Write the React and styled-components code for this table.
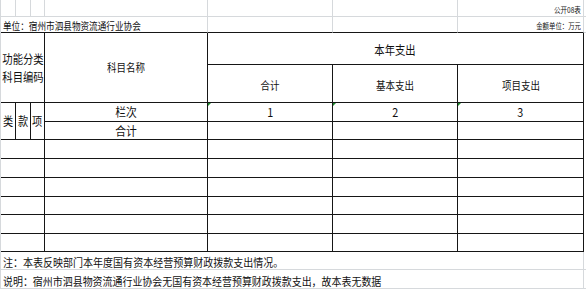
import styled, {createGlobalStyle} from "styled-components";

const DARK = "#161616";
const LIGHT = "#d6d9dc";

const GlobalStyle = createGlobalStyle`
  html, body {
    margin: 0;
    padding: 0;
    background: #fff;
  }
  body {
    font-family: "Noto Sans CJK SC", "Liberation Sans", sans-serif;
    color: #111;
  }
`;

const Sheet = styled.div`
  display: grid;
  grid-template-columns: 15px 15px 14px 163px 125px 125px 126px 1fr;
  grid-template-rows: 17px 16px 32px 38px 19px 18px 19px 19px 19px 18px 19px 18px 18px 19px;
  width: 586px;
  box-sizing: border-box;
  border-left: 1px solid ${LIGHT};
`;

const Cell = styled.div`
  grid-column: ${p => p.$c};
  grid-row: ${p => p.$r};
  box-sizing: border-box;
  position: relative;
  display: flex;
  overflow: visible;
  white-space: nowrap;
  align-items: ${p => p.$v || "center"};
  justify-content: ${p => p.$h || "center"};
  padding: ${p => p.$pad || "0"};
  border-right: 1px solid ${p => (p.$rd ? DARK : LIGHT)};
  border-bottom: 1px solid ${p => (p.$bd ? DARK : LIGHT)};
`;

// green "number stored as text" marker in the corner
const Marked = styled(Cell)`
  &::before {
    content: "";
    position: absolute;
    left: 0;
    top: 0;
    border-top: 3px solid #1e8a2e;
    border-right: 3px solid transparent;
  }
`;

const Txt = styled.span`
  display: inline-block;
  font-size: ${p => p.$size || 11}px;
  line-height: ${p => p.$lh || 1.1};
  transform: scaleX(${p => p.$sx || 0.86});
  transform-origin: ${p => p.$o || "center"};
  text-align: center;
`;

const Blank = styled.div`
  grid-column: 8;
  grid-row: ${p => p.$r};
  border-bottom: 1px solid ${LIGHT};
`;

const dataRows = [7, 8, 9, 10, 11, 12];

export default function App() {
  return (
    <>
      <GlobalStyle />
      <Sheet>
        {/* 顶部 */}
        {[1, 2, 3, 4, 5, 6].map(c => <Cell key={c} $c={c} $r={1} />)}
        <Cell $c={7} $r={1} $h="flex-end" $v="flex-end" $pad="0 2px 1px 0">
          <Txt $size={8} $sx={0.82} $o="right">公开08表</Txt>
        </Cell>
        <Blank $r={1} />

        <Cell $c="1 / 5" $r={2} $bd $h="flex-start" $v="flex-end" $pad="0 0 0 2px">
          <Txt $size={10.5} $sx={0.82} $o="left">单位：宿州市泗县物资流通行业协会</Txt>
        </Cell>
        <Cell $c={5} $r={2} $bd />
        <Cell $c={6} $r={2} $bd />
        <Cell $c={7} $r={2} $bd $h="flex-end" $v="flex-end" $pad="0 2px 1px 0">
          <Txt $size={8} $sx={0.8} $o="right">金额单位：万元</Txt>
        </Cell>
        <Blank $r={2} />

        {/* 表头 */}
        <Cell $c="1 / 4" $r="3 / 5" $rd $bd>
          <Txt $size={12} $sx={0.86} $lh={1.5}>功能分类<br />科目编码</Txt>
        </Cell>
        <Cell $c={4} $r="3 / 5" $rd $bd>
          <Txt $size={11}>科目名称</Txt>
        </Cell>
        <Cell $c="5 / 8" $r={3} $rd $bd $pad="2px 0 0 0">
          <Txt $size={12}>本年支出</Txt>
        </Cell>
        <Cell $c={5} $r={4} $rd $bd $pad="3px 0 0 0"><Txt>合计</Txt></Cell>
        <Cell $c={6} $r={4} $rd $bd $pad="3px 0 0 0"><Txt>基本支出</Txt></Cell>
        <Cell $c={7} $r={4} $rd $bd $pad="3px 0 0 0"><Txt>项目支出</Txt></Cell>

        {/* 栏次 / 合计 */}
        <Cell $c={1} $r="5 / 7" $rd $bd><Txt $size={12} $sx={0.85}>类</Txt></Cell>
        <Cell $c={2} $r="5 / 7" $rd $bd><Txt $size={12} $sx={0.85}>款</Txt></Cell>
        <Cell $c={3} $r="5 / 7" $rd $bd><Txt $size={12} $sx={0.85}>项</Txt></Cell>
        <Cell $c={4} $r={5} $rd $bd><Txt $size={12} $sx={0.9}>栏次</Txt></Cell>
        <Marked $c={5} $r={5} $rd $bd><Txt $size={12} $sx={0.9}>1</Txt></Marked>
        <Marked $c={6} $r={5} $rd $bd><Txt $size={12} $sx={0.9}>2</Txt></Marked>
        <Marked $c={7} $r={5} $rd $bd><Txt $size={12} $sx={0.9}>3</Txt></Marked>
        <Cell $c={4} $r={6} $rd $bd><Txt $size={12} $sx={0.9}>合计</Txt></Cell>
        <Cell $c={5} $r={6} $rd $bd />
        <Cell $c={6} $r={6} $rd $bd />
        <Cell $c={7} $r={6} $rd $bd />

        {/* 空行 */}
        {dataRows.map(r => [
          <Cell key={r + "a"} $c="1 / 4" $r={r} $rd $bd />,
          <Cell key={r + "b"} $c={4} $r={r} $rd $bd />,
          <Cell key={r + "c"} $c={5} $r={r} $rd $bd />,
          <Cell key={r + "d"} $c={6} $r={r} $rd $bd />,
          <Cell key={r + "e"} $c={7} $r={r} $rd $bd />,
        ])}

        {/* 注释 */}
        <Cell $c="1 / 8" $r={13} $h="flex-start" $v="flex-end" $pad="0 0 1px 2px">
          <Txt $size={11} $sx={0.91} $o="left">注：本表反映部门本年度国有资本经营预算财政拨款支出情况。</Txt>
        </Cell>
        <Blank $r={13} />
        <Cell $c="1 / 8" $r={14} $h="flex-start" $v="flex-end" $pad="0 0 1px 2px">
          <Txt $size={11} $sx={0.905} $o="left">说明：宿州市泗县物资流通行业协会无国有资本经营预算财政拨款支出，故本表无数据</Txt>
        </Cell>
        <Blank $r={14} />
      </Sheet>
    </>
  );
}
